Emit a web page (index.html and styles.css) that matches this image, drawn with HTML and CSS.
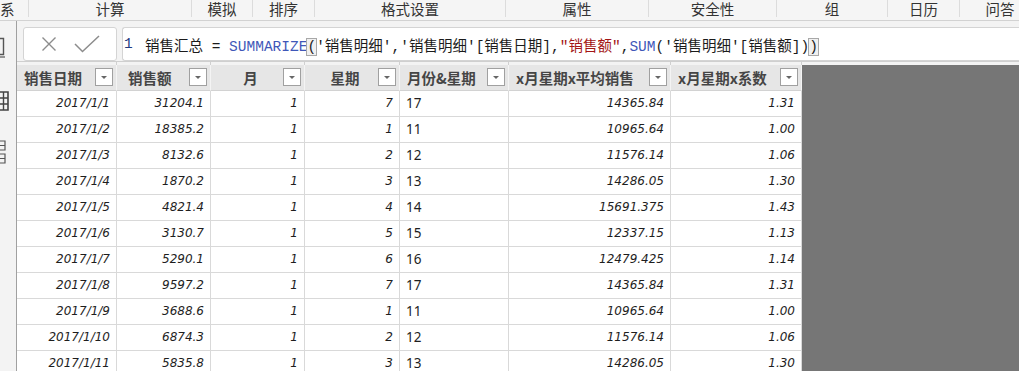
FILE: index.html
```html
<!DOCTYPE html>
<html lang="zh-CN">
<head>
    <meta charset="UTF-8">
    <title>销售汇总</title>
    <link rel="stylesheet" href="styles.css">
</head>
<body>

    <!-- Ribbon group labels -->
    <div class="ribbon">
        <div class="group g-rel">系</div>
        <div class="group g-calc">计算</div>
        <div class="group g-sim">模拟</div>
        <div class="group g-sort">排序</div>
        <div class="group g-fmt">格式设置</div>
        <div class="group g-prop">属性</div>
        <div class="group g-sec">安全性</div>
        <div class="group g-grp">组</div>
        <div class="group g-cal">日历</div>
        <div class="group g-qa">问答</div>
    </div>

    <div class="main">
        <!-- View switcher (cut off) -->
        <div class="sidebar">
            <svg class="icon icon-report" width="16" height="21" viewBox="0 0 16 21">
                <path d="M0 1.5 H3.5 V17.5 H0" fill="none" stroke="#555" stroke-width="1.4"/>
                <path d="M0 20 H5" stroke="#555" stroke-width="1.2"/>
            </svg>
            <svg class="icon icon-table" width="16" height="20" viewBox="0 0 16 20">
                <path d="M0 1 H8 V19 H0 M0 7 H8 M0 13 H8" fill="none" stroke="#444" stroke-width="1.6"/>
                <path d="M3.5 1 V19" stroke="#444" stroke-width="1.4"/>
            </svg>
            <svg class="icon icon-model" width="16" height="25" viewBox="0 0 16 25">
                <path d="M0 1 H5 V10 H0 M0 5.5 H5" fill="none" stroke="#555" stroke-width="1.2"/>
                <path d="M0 14 H5 V23 H0 M0 18.5 H5" fill="none" stroke="#555" stroke-width="1.2"/>
            </svg>
        </div>

        <div class="content">
            <!-- Formula bar -->
            <div class="formula-row">
                <div class="commit-box">
                    <svg width="16" height="16" viewBox="0 0 16 16">
                        <path d="M1.5 1.5 L14.5 14.5 M14.5 1.5 L1.5 14.5" stroke="#8c8c8c" stroke-width="1.4" fill="none"/>
                    </svg>
                    <svg width="26" height="18" viewBox="0 0 26 18">
                        <path d="M1 9 L8.5 16.5 L25 1" stroke="#8c8c8c" stroke-width="1.5" fill="none"/>
                    </svg>
                </div>
                <div class="formula-box">
                    <span class="ln">1</span><span class="dx">销售汇总 = <span class="fn">SUMMARIZE</span><span class="bracket">(</span>'销售明细','销售明细'[销售日期],<span class="str">"销售额"</span>,<span class="fn">SUM</span>('销售明细'[销售额])<span class="bracket">)</span></span>
                </div>
            </div>

            <!-- Data grid -->
            <div class="grid-area">
                <div class="data-grid">
                    <div class="row strip">
                        <div></div><div></div><div></div><div></div><div></div><div></div><div></div>
                    </div>
                    <div class="row head">
                        <div class="hcell"><span class="title">销售日期</span><span class="drop"></span></div>
                        <div class="hcell pad-wide"><span class="title">销售额</span><span class="drop"></span></div>
                        <div class="hcell"><span class="title center">月</span><span class="drop"></span></div>
                        <div class="hcell"><span class="title center">星期</span><span class="drop"></span></div>
                        <div class="hcell"><span class="title">月份&amp;星期</span><span class="drop"></span></div>
                        <div class="hcell"><span class="title">x月星期x平均销售</span><span class="drop"></span></div>
                        <div class="hcell"><span class="title">x月星期x系数</span><span class="drop"></span></div>
                    </div>

                    <div class="row"><div class="num">2017/1/1</div><div class="num">31204.1</div><div class="num">1</div><div class="num">7</div><div class="txt">17</div><div class="num">14365.84</div><div class="num">1.31</div></div>
                    <div class="row"><div class="num">2017/1/2</div><div class="num">18385.2</div><div class="num">1</div><div class="num">1</div><div class="txt">11</div><div class="num">10965.64</div><div class="num">1.00</div></div>
                    <div class="row"><div class="num">2017/1/3</div><div class="num">8132.6</div><div class="num">1</div><div class="num">2</div><div class="txt">12</div><div class="num">11576.14</div><div class="num">1.06</div></div>
                    <div class="row"><div class="num">2017/1/4</div><div class="num">1870.2</div><div class="num">1</div><div class="num">3</div><div class="txt">13</div><div class="num">14286.05</div><div class="num">1.30</div></div>
                    <div class="row"><div class="num">2017/1/5</div><div class="num">4821.4</div><div class="num">1</div><div class="num">4</div><div class="txt">14</div><div class="num">15691.375</div><div class="num">1.43</div></div>
                    <div class="row"><div class="num">2017/1/6</div><div class="num">3130.7</div><div class="num">1</div><div class="num">5</div><div class="txt">15</div><div class="num">12337.15</div><div class="num">1.13</div></div>
                    <div class="row"><div class="num">2017/1/7</div><div class="num">5290.1</div><div class="num">1</div><div class="num">6</div><div class="txt">16</div><div class="num">12479.425</div><div class="num">1.14</div></div>
                    <div class="row"><div class="num">2017/1/8</div><div class="num">9597.2</div><div class="num">1</div><div class="num">7</div><div class="txt">17</div><div class="num">14365.84</div><div class="num">1.31</div></div>
                    <div class="row"><div class="num">2017/1/9</div><div class="num">3688.6</div><div class="num">1</div><div class="num">1</div><div class="txt">11</div><div class="num">10965.64</div><div class="num">1.00</div></div>
                    <div class="row"><div class="num">2017/1/10</div><div class="num">6874.3</div><div class="num">1</div><div class="num">2</div><div class="txt">12</div><div class="num">11576.14</div><div class="num">1.06</div></div>
                    <div class="row"><div class="num">2017/1/11</div><div class="num">5835.8</div><div class="num">1</div><div class="num">3</div><div class="txt">13</div><div class="num">14286.05</div><div class="num">1.30</div></div>
                </div>
                <div class="blank"></div>
            </div>
        </div>
    </div>

</body>
</html>
```

FILE: styles.css
```css
body {
    margin: 0;
    padding: 0;
    width: 1019px;
    height: 371px;
    overflow: hidden;
    background-color: #f3f3f3;
    color: #333;
    font-family: "Noto Sans", "Noto Sans CJK SC", sans-serif;
}

/* ribbon */

.ribbon {
    display: flex;
    height: 20px;
    border-bottom: 1px solid #d2d2d2;
    background-color: #f5f5f5;
    font-family: "Noto Sans CJK SC", sans-serif;
    font-size: 14.5px;
    line-height: 17px;
    color: #333;
    white-space: nowrap;
}

.group {
    flex: none;
    text-align: center;
    border-right: 1px solid #dcdcdc;
    height: 17px;
}

.g-rel { width: 28px; text-align: left; }
.g-calc { width: 162px; }
.g-sim { width: 60px; }
.g-sort { width: 61px; }
.g-fmt { width: 190px; }
.g-prop { width: 142px; }
.g-sec { width: 127px; }
.g-grp { width: 110px; }
.g-cal { width: 71px; }
.g-qa { width: 80px; border-right: none; }

/* main */

.main {
    display: flex;
    height: 350px;
}

.sidebar {
    flex: none;
    width: 16px;
    border-right: 1px solid #a0a0a0;
    display: flex;
    flex-direction: column;
    overflow: hidden;
}

.icon {
    display: block;
    flex: none;
}

.icon-report { margin-top: 16px; }
.icon-table { margin-top: 33px; }
.icon-model { margin-top: 29px; }

.content {
    flex: 1;
    min-width: 0;
    display: flex;
    flex-direction: column;
}

/* formula bar */

.formula-row {
    display: flex;
    height: 34px;
    padding-top: 6px;
    border-bottom: 1px solid #cfcfcf;
    gap: 5px;
    padding-left: 6px;
}

.commit-box {
    flex: none;
    width: 94px;
    height: 34px;
    box-sizing: border-box;
    background-color: #fff;
    border: 1px solid #d4d4d4;
    border-radius: 3px;
    display: flex;
    align-items: center;
    padding-left: 17px;
    gap: 17px;
}

.formula-box {
    flex: 1;
    height: 34px;
    box-sizing: border-box;
    background-color: #fff;
    border: 1px solid #d4d4d4;
    border-right: none;
    border-radius: 3px 0 0 3px;
    display: flex;
    align-items: center;
    white-space: nowrap;
    font-family: "Liberation Mono", "Noto Sans CJK SC", monospace;
    font-size: 14.5px;
    color: #1b1b1b;
}

.ln {
    display: inline-block;
    width: 21px;
    padding-left: 1px;
    color: #1f3a80;
}

.fn {
    color: #3f57b8;
}

.str {
    color: #a31515;
}

.bracket {
    outline: 1px solid #a8a8a8;
    background-color: #f0f0f0;
}

/* data grid */

.grid-area {
    flex: 1;
    display: flex;
    min-height: 0;
}

.data-grid {
    flex: none;
    width: 785px;
    background-color: #fff;
}

.row {
    display: grid;
    grid-template-columns: 100px 94px 94px 95px 109px 162px 131px;
    height: 26px;
}

.row > div {
    box-sizing: border-box;
    border-right: 1px solid #d9d9d9;
    border-bottom: 1px solid #d9d9d9;
    font-size: 13.5px;
    line-height: 25px;
    color: #1e1e1e;
    white-space: nowrap;
    overflow: hidden;
}

.row.strip {
    height: 3px;
    background-color: #f3f3f3;
}

.row.strip > div {
    border-bottom: none;
    border-right-color: #d0d0d0;
}

.row.head {
    background-color: #e6e6e6;
}

.row.head > div {
    border-right-color: #f4f4f4;
    border-bottom-color: #d2d2d2;
}

.hcell {
    display: flex;
    align-items: center;
    padding-left: 7px;
    padding-right: 3px;
}

.hcell.pad-wide {
    padding-left: 11px;
}

.title {
    flex: 1;
    font-family: "Noto Sans CJK SC", sans-serif;
    font-weight: bold;
    font-size: 14.5px;
    color: #454545;
}

.title.center {
    text-align: center;
}

.drop {
    flex: none;
    width: 18px;
    height: 18px;
    margin-top: -2px;
    box-sizing: border-box;
    border: 1px solid #a0a0a0;
    background-color: #fff;
    position: relative;
}

.drop::after {
    content: "";
    position: absolute;
    left: 5px;
    top: 7px;
    border-left: 3.5px solid transparent;
    border-right: 3.5px solid transparent;
    border-top: 3.5px solid #666;
}

.num {
    text-align: right;
    font-family: "DejaVu Sans", sans-serif;
    font-size: 12px;
    font-style: italic;
    padding-right: 6px;
}

.row > .num {
    font-size: 12px;
}

.txt {
    padding-left: 6px;
}

.blank {
    flex: 1;
    margin-top: 3px;
    background-color: #767676;
}
```
